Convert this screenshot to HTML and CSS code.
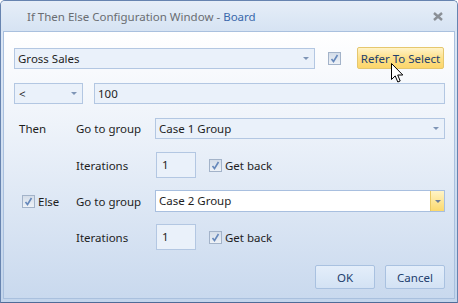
FILE: index.html
```html
<!DOCTYPE html>
<html lang="en">
  <head>
    <meta charset="UTF-8" />
    <title>If Then Else Configuration Window</title>
    <link rel="stylesheet" href="styles.css">
  </head>
  <body>
    <div class="window">
      <div class="titlebar">
        <span class="title">If Then Else Configuration Window - <span class="title-doc">Board</span></span>
        <svg class="close" width="10" height="9" viewBox="0 0 10 9">
          <path d="M1 1 L9 8 M9 1 L1 8" stroke="#8a8f96" stroke-width="2.4" fill="none"/>
        </svg>
      </div>
      <div class="client">
        <div class="row row-top">
          <div class="combo combo-field">Gross Sales<span class="arrow"></span></div>
          <span class="check"><svg width="9" height="9" viewBox="0 0 9 9"><path d="M1.5 5 L3.5 7.5 L7.5 1" stroke="#6688bb" stroke-width="1.6" fill="none"/></svg></span>
          <button class="btn btn-refer">Refer To Select</button>
        </div>
        <div class="row row-cond">
          <div class="combo combo-op">&lt;<span class="arrow"></span></div>
          <div class="input input-value">100</div>
        </div>

        <div class="row row-group">
          <div class="lead">Then</div>
          <div class="label">Go to group</div>
          <div class="combo combo-group">Case 1 Group<span class="arrow"></span></div>
        </div>
        <div class="row row-iter">
          <div class="lead"></div>
          <div class="label">Iterations</div>
          <div class="input input-iter">1</div>
          <span class="check check-back"><svg width="9" height="9" viewBox="0 0 9 9"><path d="M1.5 5 L3.5 7.5 L7.5 1" stroke="#6688bb" stroke-width="1.6" fill="none"/></svg></span>
          <span class="check-text">Get back</span>
        </div>

        <div class="row row-group row-else">
          <div class="lead lead-check">
            <span class="check"><svg width="9" height="9" viewBox="0 0 9 9"><path d="M1.5 5 L3.5 7.5 L7.5 1" stroke="#6688bb" stroke-width="1.6" fill="none"/></svg></span>
            <span class="check-text">Else</span>
          </div>
          <div class="label">Go to group</div>
          <div class="combo combo-group combo-active">Case 2 Group<span class="drop"><span class="arrow"></span></span></div>
        </div>
        <div class="row row-iter row-iter2">
          <div class="lead"></div>
          <div class="label">Iterations</div>
          <div class="input input-iter">1</div>
          <span class="check check-back"><svg width="9" height="9" viewBox="0 0 9 9"><path d="M1.5 5 L3.5 7.5 L7.5 1" stroke="#6688bb" stroke-width="1.6" fill="none"/></svg></span>
          <span class="check-text">Get back</span>
        </div>

        <div class="row row-buttons">
          <button class="btn btn-dialog">OK</button>
          <button class="btn btn-dialog">Cancel</button>
        </div>
      </div>
      <!-- mouse pointer over the Refer button -->
      <svg class="cursor" width="13" height="21" viewBox="0 0 13 21">
        <path d="M0.5 0.5 L0.5 16.5 L4.2 12.9 L6.8 19 L9.2 18 L6.7 12 L11.8 12 Z" fill="#fff" stroke="#000" stroke-width="1"/>
      </svg>
    </div>
  </body>
</html>
```

FILE: styles.css
```css
body {
  margin: 0;
  padding: 0;
  font-family: "Noto Sans", "Open Sans", sans-serif;
  font-size: 11.5px;
  color: #1e1e1e;
  background-color: #fff;
}
.window {
  position: relative;
  width: 458px;
  height: 303px;
  box-sizing: border-box;
  border: 1px solid #6784b0;
  border-bottom-color: #4f6c98;
  border-radius: 5px 5px 0 0;
  background: linear-gradient(#dfe9f6, #c3d5ec);
  display: flex;
  flex-direction: column;
}
.titlebar {
  height: 30px;
  display: flex;
  align-items: center;
  padding-left: 26px;
  padding-right: 14px;
  background: linear-gradient(#e6eef8, #d6e3f3);
  border-radius: 4px 4px 0 0;
}
.title {
  flex: 1;
  color: #6a6d72;
}
.title-doc {
  color: #3a68ab;
}
.close {
  margin-top: 1px;
}
.client {
  flex: 1;
  margin: 0 2px 3px;
  border: 1px solid #a9c0de;
  background: linear-gradient(#ffffff 0%, #eef3fa 35%, #c9d9ee 100%);
  padding: 15px 9px 0 10px;
}
.row {
  display: flex;
  align-items: center;
}
.row-top {
  height: 22px;
}
.row-cond {
  height: 21px;
  margin-top: 14px;
}
.row-group {
  height: 21px;
  margin-top: 14px;
}
.row-iter {
  height: 26px;
  margin-top: 13px;
}
.row-else {
  height: 22px;
  margin-top: 12px;
}
.row-iter2 {
  margin-top: 12px;
}
.row-buttons {
  justify-content: flex-end;
  gap: 10px;
  margin-top: 15px;
}
.combo,
.input {
  position: relative;
  box-sizing: border-box;
  height: 21px;
  line-height: 19px;
  border: 1px solid #b3c7e2;
  background-color: #eaf1fa;
  padding-left: 3px;
  white-space: nowrap;
}
.arrow {
  position: absolute;
  right: 5px;
  top: 8px;
  width: 0;
  height: 0;
  border-left: 3px solid transparent;
  border-right: 3px solid transparent;
  border-top: 3px solid #7e95b6;
}
.combo-field {
  width: 301px;
  margin-top: 1px;
}
.combo-op {
  width: 69px;
  padding-left: 4px;
}
.input-value {
  flex: 1;
  margin-left: 11px;
}
.combo-group {
  flex: 1;
}
.combo-active {
  height: 22px;
  background-color: #fff;
  border-color: #a8bfdf;
}
.drop {
  position: absolute;
  right: 0;
  top: 0;
  bottom: 0;
  width: 13px;
  border-left: 1px solid #e9c964;
  background: linear-gradient(#fff4c6, #fcd96d);
}
.drop .arrow {
  right: 3px;
  top: 9px;
  border-top-color: #6f7f99;
}
.lead {
  width: 62px;
  flex-shrink: 0;
  box-sizing: border-box;
  padding-left: 5px;
}
.lead-check {
  display: flex;
  align-items: center;
  padding-left: 8px;
}
.label {
  width: 79px;
  flex-shrink: 0;
}
.input-iter {
  width: 40px;
  height: 26px;
  line-height: 24px;
  margin-left: 1px;
  padding-left: 5px;
}
.check {
  width: 13px;
  height: 13px;
  box-sizing: border-box;
  border: 1px solid #a3b3c9;
  background: linear-gradient(#d4dde9, #eef2f7);
  display: inline-flex;
  align-items: center;
  justify-content: center;
  flex-shrink: 0;
}
.row-top .check {
  margin-left: 13px;
}
.check-back {
  margin-left: 13px;
}
.check-text {
  margin-left: 3px;
}
.btn {
  font-family: inherit;
  font-size: 11.5px;
  padding: 0;
  cursor: default;
}
.btn-refer {
  width: 87px;
  height: 22px;
  margin-left: 16px;
  border: 1px solid #e5c76e;
  border-radius: 2px;
  background: linear-gradient(#fff3c8, #fde08a 50%, #fcd66b);
  color: #22406e;
}
.btn-dialog {
  width: 60px;
  height: 24px;
  border: 1px solid #a9c1e0;
  border-radius: 2px;
  background: linear-gradient(#e4eefa, #d3e2f4);
  color: #22406e;
}
.cursor {
  position: absolute;
  left: 390px;
  top: 62px;
}
```
